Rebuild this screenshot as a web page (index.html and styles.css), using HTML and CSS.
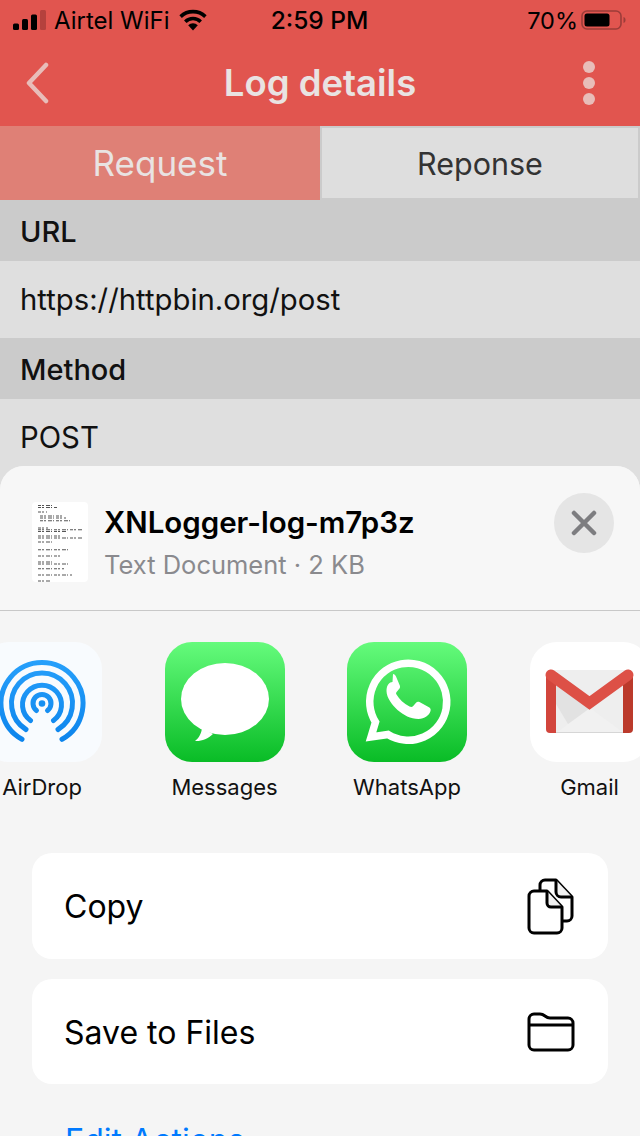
FILE: index.html
```html
<!DOCTYPE html>
<html lang="en">
<head>
    <meta charset="UTF-8">
    <meta name="viewport" content="width=device-width, initial-scale=1.0">
    <title>Log details</title>
    <link rel="stylesheet" href="styles.css">
</head>
<body>

<div class="header">
    <div class="status">
        <div class="status-left">
            <svg class="signal" width="34" height="20" viewBox="0 0 34 20">
                <rect x="0" y="13.500" width="6" height="6.500" rx="1.500" fill="#000"/>
                <rect x="9" y="9" width="6" height="11" rx="1.500" fill="#000"/>
                <rect x="18" y="4.500" width="6" height="15.500" rx="1.500" fill="#000"/>
                <rect x="27" y="0" width="6" height="20" rx="1.500" fill="#b5413d"/>
            </svg>
            <span>Airtel WiFi</span>
            <svg class="wifi" width="30" height="22" viewBox="0 0 30 22">
                <path d="M15 21.500l-4.800-5.300a6.800 6.800 0 0 1 9.600 0z" fill="#000"/>
                <path d="M7.300 12.700a11 11 0 0 1 15.400 0" fill="none" stroke="#000" stroke-width="3.600"/>
                <path d="M2.600 7.600a18 18 0 0 1 24.800 0" fill="none" stroke="#000" stroke-width="3.600"/>
            </svg>
        </div>
        <div class="status-time">2:59 PM</div>
        <div class="status-right">
            <span>70%</span>
            <svg width="45" height="20" viewBox="0 0 45 20">
                <rect x="1" y="1" width="39" height="18" rx="5" fill="none" stroke="#9c3c39" stroke-width="1.600"/>
                <rect x="3.500" y="3.500" width="25" height="13" rx="2.500" fill="#000"/>
                <path d="M42.500 7c1.600.5 2 1.600 2 3s-.4 2.500-2 3z" fill="#9c3c39"/>
            </svg>
        </div>
    </div>
    <div class="nav">
        <svg class="back" width="26" height="42" viewBox="0 0 26 42">
            <path d="M22 3L5 21l17 18" fill="none" stroke="#e8bdb9" stroke-width="4.500" stroke-linecap="round" stroke-linejoin="round"/>
        </svg>
        <div class="nav-title">Log details</div>
        <div class="dots"><i></i><i></i><i></i></div>
    </div>
</div>

<div class="tabs">
    <div class="tab active">Request</div>
    <div class="tab">Reponse</div>
</div>

<div class="section-label">URL</div>
<div class="section-value">https://httpbin.org/post</div>
<div class="section-label">Method</div>
<div class="section-value">POST</div>

<div class="sheet">
    <div class="sheet-head">
        <svg class="thumb" width="56" height="80" viewBox="0 0 56 80">
            <rect width="56" height="80" rx="4" fill="#fff"/>
            <g fill="none" stroke="#555" stroke-width="1.100" stroke-dasharray="3 1 2 2 4 1 1 2">
                <path d="M6 3.500h14"/><path d="M6 5.500h20"/><path d="M6 10h9"/>
                <path d="M8 14h24"/><path d="M8 16h26"/><path d="M8 18.700h30"/>
                <path d="M6 26h10"/><path d="M6 27.700h44"/><path d="M6 29.500h28"/>
                <path d="M6 34h24"/><path d="M6 36h44"/><path d="M6 40h14"/>
                <path d="M6 47.700h30"/><path d="M6 54h24"/><path d="M6 60h16"/><path d="M6 62h32"/>
                <path d="M6 66.700h26"/><path d="M6 73h34"/><path d="M6 79h12"/>
            </g>
        </svg>
        <div class="file-info">
            <div class="file-name">XNLogger-log-m7p3z</div>
            <div class="file-meta">Text Document · 2 KB</div>
        </div>
        <div class="close">
            <svg width="26" height="26" viewBox="0 0 26 26">
                <path d="M3 3l20 20M23 3L3 23" fill="none" stroke="#7d7d80" stroke-width="4.500" stroke-linecap="round"/>
            </svg>
        </div>
    </div>

    <div class="apps">
        <div class="app">
            <svg class="app-icon" width="120" height="120" viewBox="0 0 120 120">
                <defs>
                    <linearGradient id="airdrop" gradientUnits="userSpaceOnUse" x1="0" y1="18" x2="0" y2="100">
                        <stop offset="0" stop-color="#27a0fb"/>
                        <stop offset="1" stop-color="#0c84ec"/>
                    </linearGradient>
                </defs>
                <rect width="120" height="120" rx="27" fill="#f8fbfe"/>
                <g fill="none" stroke="url(#airdrop)" stroke-width="5" stroke-linecap="round">
                    <path d="M40 97.300A41 41 0 1 1 80 97.300"/>
                    <path d="M44 87.500A30.500 30.500 0 1 1 76 87.500"/>
                    <path d="M48.500 78.500A19.500 19.500 0 1 1 71.500 78.500"/>
                    <path d="M54.500 68.500A9 9 0 1 1 65.500 68.500"/>
                </g>
                <circle cx="60" cy="61.500" r="3.300" fill="#1590f2"/>
            </svg>
            <div class="app-name">AirDrop</div>
        </div>
        <div class="app">
            <svg class="app-icon" width="120" height="120" viewBox="0 0 120 120">
                <defs>
                    <linearGradient id="green" x1="0" y1="0" x2="0" y2="1">
                        <stop offset="0" stop-color="#65fb7c"/>
                        <stop offset="1" stop-color="#09bc26"/>
                    </linearGradient>
                </defs>
                <rect width="120" height="120" rx="27" fill="url(#green)"/>
                <ellipse cx="60" cy="57" rx="44" ry="36" fill="#fff"/>
                <path d="M37 86c-.5 5-3 10-7 13 6 .5 13-2 18-7z" fill="#fff"/>
            </svg>
            <div class="app-name">Messages</div>
        </div>
        <div class="app">
            <svg class="app-icon" width="120" height="120" viewBox="0 0 120 120">
                <rect width="120" height="120" rx="27" fill="url(#green)"/>
                <path d="M24 95L28.500 80A38.500 38.500 0 1 1 41 92.500Z" fill="none" stroke="#fff" stroke-width="7.500"/>
                <path transform="translate(.5 -3)" d="M45 43c-3 0-6 3-6 9c0 7 6 14 11 19c6 5 13 9 21 9c6 0 11-4 12-8c.5-2 0-3-2-4l-9-5c-1.500-.7-2.500-.4-3.500.8l-3 3.500c-1 1-2 1-3.500.3c-6-3-10-7-13-12c-.8-1.400-.4-2.300.5-3.200l2.500-3c.7-1 .7-2 .2-3.200l-3.700-8.700c-.7-1.600-1.600-2.500-3-2.500z" fill="#fff"/>
            </svg>
            <div class="app-name">WhatsApp</div>
        </div>
        <div class="app">
            <svg class="app-icon" width="120" height="120" viewBox="0 0 120 120">
                <rect width="120" height="120" rx="27" fill="#fff"/>
                <rect x="16" y="28" width="87" height="63" rx="4" fill="#eeeeee"/>
                <path d="M26 91L60 66L94 91z" fill="#f1f1f1"/>
                <path d="M26 42L60 66L38 82L26 62z" fill="#e2e2e2"/>
                <rect x="26" y="90" width="68" height="1" fill="#d6d6d6"/>
                <path d="M16 34v53a4 4 0 0 0 4 4h6V40z" fill="#d2453c"/>
                <path d="M103 34v53a4 4 0 0 1-4 4h-6V40z" fill="#bb3a2b"/>
                <path d="M21 33L59.500 61L98 33" fill="none" stroke="#dd5046" stroke-width="11" stroke-linecap="round" stroke-linejoin="miter"/>
            </svg>
            <div class="app-name">Gmail</div>
        </div>
    </div>

    <div class="actions">
        <div class="action">
            <span>Copy</span>
            <svg width="48" height="58" viewBox="0 0 48 58">
                <g fill="#fff" stroke="#000" stroke-width="3" stroke-linejoin="round">
                    <path d="M18 2h11l16 17v19a5 5 0 0 1-5 5H18a5 5 0 0 1-5-5V7a5 5 0 0 1 5-5z"/>
                    <path d="M29 2v12a5 5 0 0 0 5 5h11" fill="#f2f2f2"/>
                    <path d="M7 13h13l15 16v21a5 5 0 0 1-5 5H7a5 5 0 0 1-5-5V18a5 5 0 0 1 5-5z"/>
                    <path d="M20 13v12a4 4 0 0 0 4 4h11" fill="#f2f2f2"/>
                </g>
            </svg>
        </div>
        <div class="action">
            <span>Save to Files</span>
            <svg width="48" height="40" viewBox="0 0 48 40">
                <g fill="none" stroke="#000" stroke-width="3" stroke-linejoin="round">
                    <path d="M2 7a5 5 0 0 1 5-5h6c5 0 5 4 10 4h18a5 5 0 0 1 5 5v22a5 5 0 0 1-5 5H7a5 5 0 0 1-5-5z"/>
                    <path d="M2 13h44"/>
                </g>
            </svg>
        </div>
    </div>
    <div class="edit-actions">Edit Actions...</div>
</div>

</body>
</html>
```

FILE: styles.css
```css
html, body {
    margin: 0;
    height: 1136px;
    overflow: hidden;
}
body {
    position: relative;
    font-family: Inter, "Liberation Sans", sans-serif;
    background-color: #dfdfdf;
    color: #111;
}
.header {
    background-color: #e1554f;
    height: 126px;
}
.status {
    height: 40px;
    display: grid;
    grid-template-columns: 1fr auto 1fr;
    align-items: center;
    font-size: 24px;
    color: #000;
    padding: 0 14px 0 13px;
}
.status-left {
    display: flex;
    align-items: center;
}
.status-left span {
    margin-left: 7px;
}
.wifi {
    margin-left: 8px;
}
.status-time {
    font-size: 24.500px;
    font-weight: 500;
}
.status-right {
    display: flex;
    justify-content: flex-end;
    align-items: center;
    gap: 3px;
}
.status-right span {
    font-size: 23.500px;
}
.nav {
    height: 86px;
    display: flex;
    align-items: center;
    justify-content: space-between;
    padding: 0 45px 4px 24px;
    position: relative;
}
.nav-title {
    position: absolute;
    left: 0;
    right: 0;
    top: 21px;
    text-align: center;
    font-size: 36.500px;
    font-weight: 600;
    color: #e9e3e2;
}
.dots {
    display: flex;
    flex-direction: column;
    gap: 4px;
}
.dots i {
    display: block;
    width: 12px;
    height: 12px;
    border-radius: 50%;
    background-color: #e8bdb9;
}
.tabs {
    display: flex;
    height: 74px;
}
.tab {
    flex: 0 0 320px;
    box-sizing: border-box;
    display: flex;
    align-items: center;
    justify-content: center;
    background-color: #dedede;
    border: 2px solid #cbcbcb;
    font-size: 30.500px;
    color: #333;
}
.tab.active {
    background-color: #df8076;
    border: none;
    font-size: 35px;
    color: #e9e3e2;
}
.section-label {
    height: 61px;
    line-height: 63px;
    padding-left: 20px;
    background-color: #cbcbcb;
    font-size: 29px;
    font-weight: 500;
}
.section-value {
    height: 77px;
    line-height: 77px;
    padding-left: 20px;
    font-size: 29.300px;
}
.sheet {
    position: absolute;
    left: 0;
    right: 0;
    top: 466px;
    height: 670px;
    background-color: #f5f5f5;
    border-radius: 24px 24px 0 0;
}
.sheet-head {
    display: flex;
    align-items: flex-start;
    box-sizing: border-box;
    height: 145px;
    padding: 36px 26px 0 32px;
    background-color: #f7f7f7;
    border-bottom: 1px solid #c8c8c8;
    border-radius: 24px 24px 0 0;
}
.thumb {
    flex-shrink: 0;
}
.file-info {
    flex: 1;
    margin-left: 17px;
}
.file-name {
    font-size: 29.500px;
    font-weight: 600;
    line-height: 40px;
    margin-bottom: 3px;
    margin-left: -1px;
    color: #000;
}
.file-meta {
    font-size: 25.500px;
    line-height: 40px;
    margin-left: -1px;
    color: #8a8a8e;
}
.close {
    width: 60px;
    height: 60px;
    margin-top: -9px;
    border-radius: 50%;
    background-color: #e5e5e5;
    display: flex;
    align-items: center;
    justify-content: center;
}
.apps {
    display: flex;
    gap: 62.500px;
    padding-top: 31px;
    margin-left: -18px;
}
.app {
    flex: 0 0 120px;
}
.app-icon {
    display: block;
}
.app-name {
    margin-top: 11px;
    text-align: center;
    font-size: 22px;
    line-height: 28px;
    color: #111;
    white-space: nowrap;
}
.actions {
    margin: 52px 32px 0;
    display: flex;
    flex-direction: column;
    gap: 20px;
}
.action {
    height: 105.500px;
    display: flex;
    align-items: center;
    justify-content: space-between;
    padding: 2px 33px 0 33px;
    box-sizing: border-box;
    background-color: #fff;
    border-radius: 20px;
    font-size: 32px;
    color: #000;
}
.action span {
    margin-left: -1px;
}
.edit-actions {
    margin: 37px 0 0 65px;
    font-size: 32px;
    line-height: 40px;
    color: #007aff;
}
```
